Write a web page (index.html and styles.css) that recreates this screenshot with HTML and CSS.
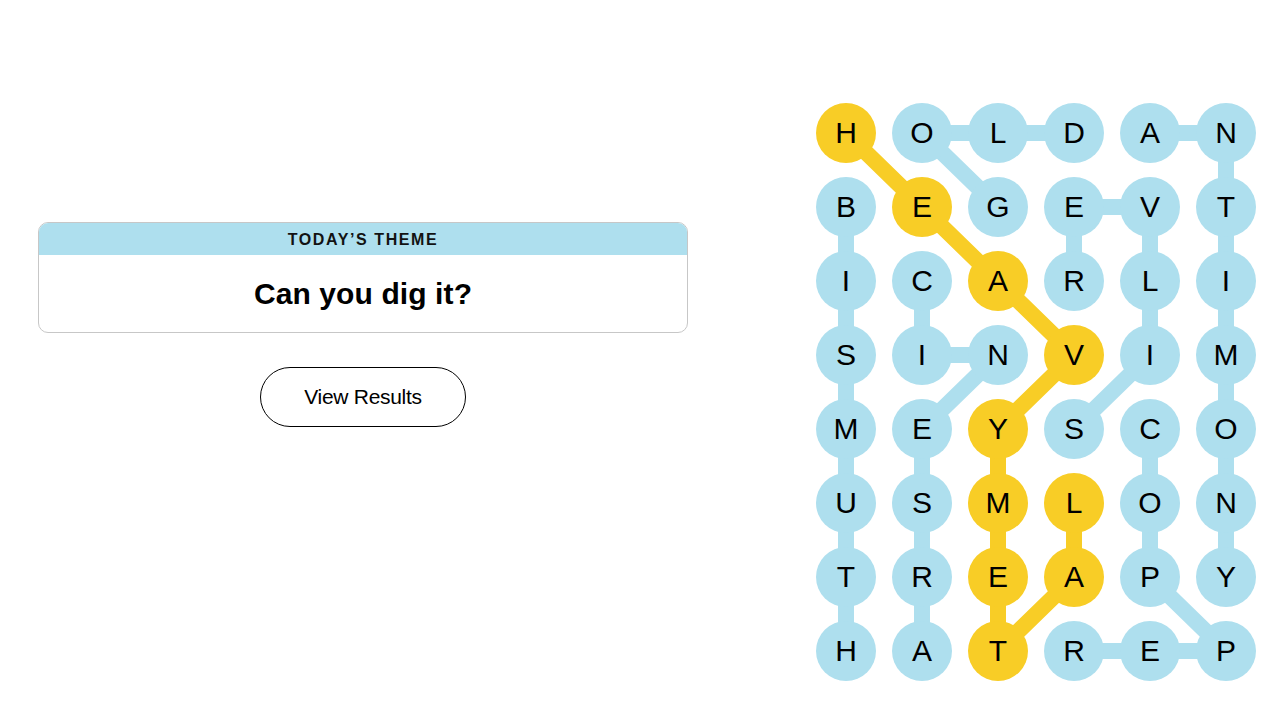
FILE: index.html
```html
<!DOCTYPE html>
<html lang="en">
<head>
<meta charset="utf-8">
<title>Strands</title>
<link rel="stylesheet" href="styles.css">
</head>
<body>
<main class="page">
  <section class="left">
    <div class="theme-card">
      <div class="theme-head">Today’s Theme</div>
      <div class="theme-body">Can you dig it?</div>
    </div>
    <button class="results-btn" type="button">View Results</button>
  </section>
  <section class="board">
    <svg class="links" width="440" height="578" viewBox="0 0 440 578" aria-hidden="true">
      <g class="blue">
        <polyline points="30,104 30,548"/>
        <polyline points="106,30 258,30"/>
        <polyline points="106,30 182,104"/>
        <polyline points="334,30 410,30 410,474"/>
        <polyline points="334,104 258,104 258,178"/>
        <polyline points="334,104 334,252 258,326"/>
        <polyline points="106,178 106,252 182,252 106,326 106,548"/>
        <polyline points="334,326 334,474 410,548 258,548"/>
      </g>
      <g class="yellow">
        <polyline points="30,30 106,104 182,178 258,252 182,326 182,548 258,474 258,400"/>
      </g>
    </svg>
    <div class="grid">
      <span class="cell y">H</span><span class="cell">O</span><span class="cell">L</span><span class="cell">D</span><span class="cell">A</span><span class="cell">N</span>
      <span class="cell">B</span><span class="cell y">E</span><span class="cell">G</span><span class="cell">E</span><span class="cell">V</span><span class="cell">T</span>
      <span class="cell">I</span><span class="cell">C</span><span class="cell y">A</span><span class="cell">R</span><span class="cell">L</span><span class="cell">I</span>
      <span class="cell">S</span><span class="cell">I</span><span class="cell">N</span><span class="cell y">V</span><span class="cell">I</span><span class="cell">M</span>
      <span class="cell">M</span><span class="cell">E</span><span class="cell y">Y</span><span class="cell">S</span><span class="cell">C</span><span class="cell">O</span>
      <span class="cell">U</span><span class="cell">S</span><span class="cell y">M</span><span class="cell y">L</span><span class="cell">O</span><span class="cell">N</span>
      <span class="cell">T</span><span class="cell">R</span><span class="cell y">E</span><span class="cell y">A</span><span class="cell">P</span><span class="cell">Y</span>
      <span class="cell">H</span><span class="cell">A</span><span class="cell y">T</span><span class="cell">R</span><span class="cell">E</span><span class="cell">P</span>
    </div>
  </section>
</main>
</body>
</html>
```
FILE: styles.css
```css
html, body {
  margin: 0;
  padding: 0;
  background: #ffffff;
}
body {
  font-family: "Liberation Sans", Arial, sans-serif;
  color: #000;
}
.page {
  display: flex;
  align-items: flex-start;
  width: 1280px;
  height: 720px;
}
.left {
  display: flex;
  flex-direction: column;
  align-items: center;
  width: 650px;
  margin-left: 38px;
  padding-top: 222px;
}
.theme-card {
  width: 100%;
  box-sizing: border-box;
  border: 1px solid #c7c7c7;
  border-radius: 10px;
  overflow: hidden;
}
.theme-head {
  background: #aedfee;
  height: 32px;
  line-height: 33px;
  text-align: center;
  text-transform: uppercase;
  font-size: 16px;
  font-weight: 700;
  letter-spacing: 1.6px;
  color: #121212;
}
.theme-body {
  height: 77px;
  line-height: 77px;
  text-align: center;
  font-size: 30px;
  font-weight: 700;
  letter-spacing: 0.1px;
}
.results-btn {
  margin-top: 34px;
  width: 206px;
  height: 60px;
  border: 1px solid #000;
  border-radius: 30px;
  background: #fff;
  font-family: "Liberation Sans", Arial, sans-serif;
  font-size: 21px;
  color: #000;
  letter-spacing: -0.3px;
  padding: 0;
}
.board {
  position: relative;
  margin-left: 128px;
  margin-top: 103px;
  width: 440px;
  height: 578px;
}
.links {
  position: absolute;
  left: 0;
  top: 0;
}
.links polyline {
  fill: none;
  stroke-width: 16;
  stroke-linecap: round;
  stroke-linejoin: round;
}
.blue polyline { stroke: #aedfee; }
.yellow polyline { stroke: #f8cd26; }
.grid {
  position: relative;
  display: grid;
  grid-template-columns: repeat(6, 60px);
  grid-template-rows: repeat(8, 60px);
  column-gap: 16px;
  row-gap: 14px;
}
.cell {
  display: flex;
  align-items: center;
  justify-content: center;
  width: 60px;
  height: 60px;
  border-radius: 50%;
  background: #aedfee;
  font-size: 30px;
  line-height: 1;
  color: #000;
}
.cell.y { background: #f8cd26; }
```
